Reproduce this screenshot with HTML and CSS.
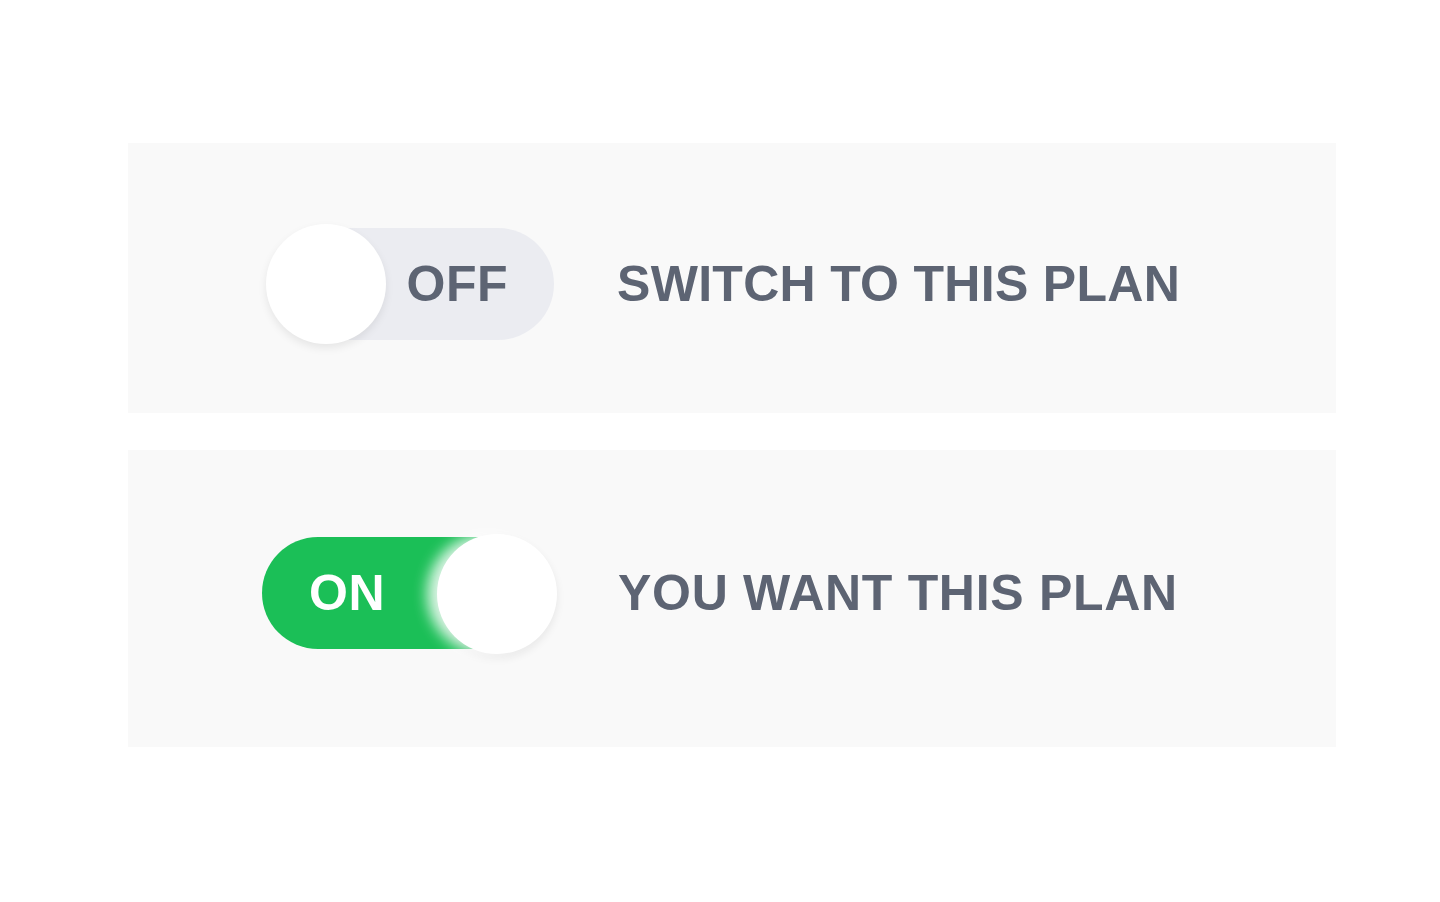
FILE: index.html
```html
<!DOCTYPE html>
<html lang="en">
<head>
    <meta charset="UTF-8">
    <meta name="viewport" content="width=device-width, initial-scale=1.0">
    <title>Plan switch</title>
    <link rel="stylesheet" href="styles.css">
</head>
<body>
    <div class="plans">
        <div class="plan-row plan-row-off">
            <div class="switch">
                <span class="switch-knob"></span>
                <span class="switch-label">OFF</span>
            </div>
            <p class="plan-text">SWITCH TO THIS PLAN</p>
        </div>
        <div class="plan-row plan-row-on">
            <div class="switch switch-on">
                <span class="switch-label">ON</span>
                <span class="switch-knob"></span>
            </div>
            <p class="plan-text">YOU WANT THIS PLAN</p>
        </div>
    </div>
</body>
</html>
```

FILE: styles.css
```css
body {
    font-family: 'Liberation Sans', Arial, sans-serif;
    background-color: #fff;
    margin: 0;
}
.plans {
    width: 1208px;
    margin: 0 0 0 128px;
    padding-top: 143px;
    display: flex;
    flex-direction: column;
    gap: 37px;
}
.plan-row {
    background-color: #f9f9f9;
    display: flex;
    align-items: center;
    box-sizing: border-box;
}
.plan-row-off {
    height: 270px;
    padding: 11px 0 0 142px;
}
.plan-row-on {
    height: 297px;
    padding: 0 0 11px 134px;
}
.switch {
    position: relative;
    width: 284px;
    height: 112px;
    border-radius: 56px;
    background-color: #ebecf1;
    display: flex;
    align-items: center;
    justify-content: flex-end;
    padding-right: 46px;
    box-sizing: border-box;
}
.switch-knob {
    position: absolute;
    left: -4px;
    top: -4px;
    width: 120px;
    height: 120px;
    border-radius: 50%;
    background-color: #fff;
    box-shadow: 0 4px 8px rgba(0, 0, 0, 0.08);
}
.switch-label {
    font-size: 50px;
    font-weight: bold;
    color: #5d6473;
    letter-spacing: 0.5px;
}
.switch-on {
    width: 292px;
    background-color: #1bbf57;
    justify-content: flex-start;
    padding: 0 0 0 47px;
}
.switch-on .switch-knob {
    left: 175px;
    top: -3px;
    box-shadow: -10px 0 14px rgba(255, 255, 255, 0.85), 0 4px 8px rgba(0, 0, 0, 0.08);
}
.switch-on .switch-label {
    color: #fff;
}
.plan-text {
    margin: 0 0 0 63px;
    font-size: 50px;
    font-weight: bold;
    color: #5d6473;
    letter-spacing: 0.3px;
}
.plan-row-on .plan-text {
    margin-left: 64px;
    letter-spacing: 0.7px;
}
```
